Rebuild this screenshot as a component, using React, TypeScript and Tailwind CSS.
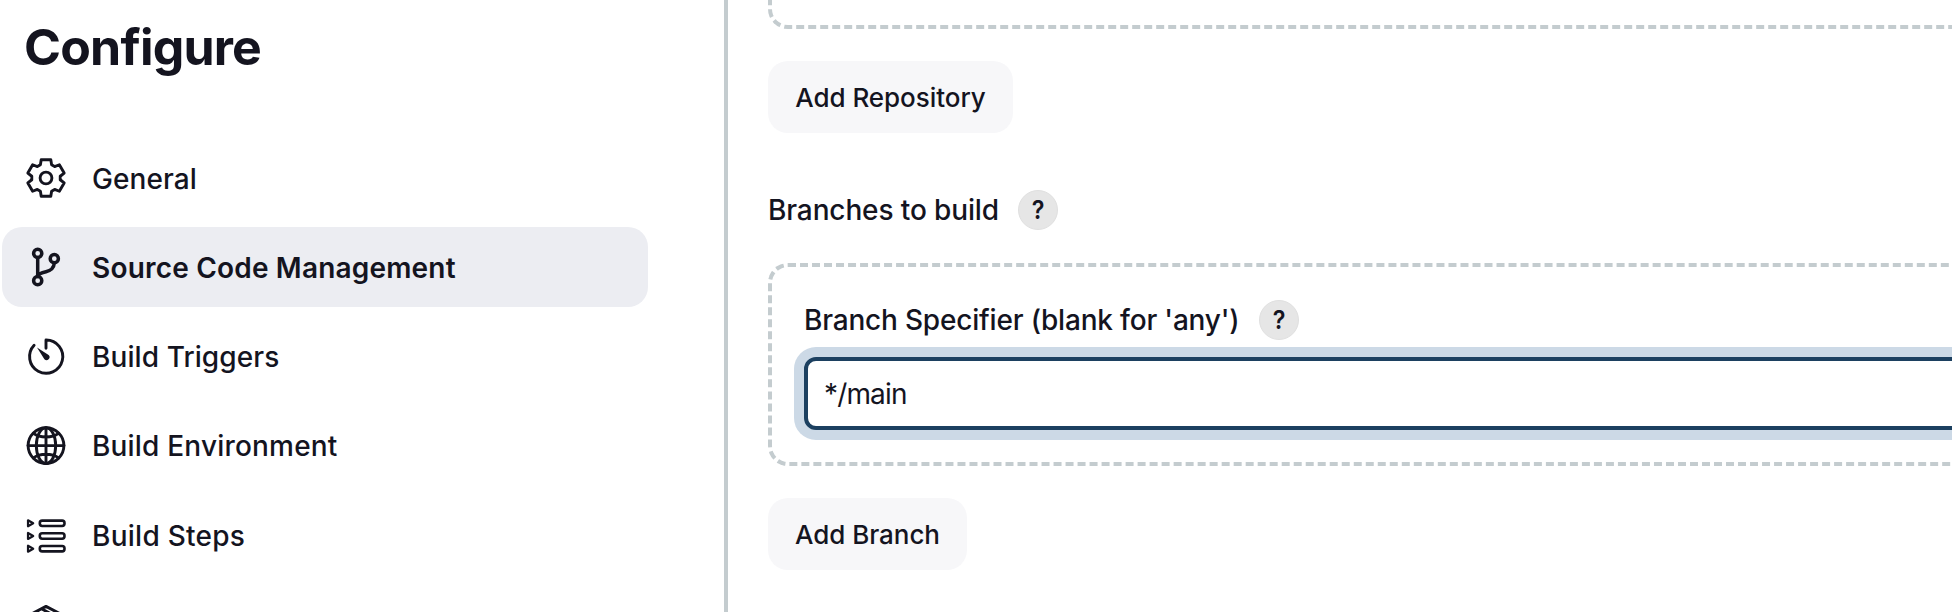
import type { ReactNode } from "react";

function gearPath(): string {
  const tooth: [number, number][] = [
    [-5.6, -13.2],
    [-4.8, -18.2],
    [4.8, -18.2],
    [5.6, -13.2],
  ];
  const points: string[] = [];
  for (let i = 0; i < 6; i++) {
    const a = (i * Math.PI) / 3;
    for (const [x, y] of tooth) {
      const px = 22 + x * Math.cos(a) - y * Math.sin(a);
      const py = 22 + x * Math.sin(a) + y * Math.cos(a);
      points.push(`${px.toFixed(2)} ${py.toFixed(2)}`);
    }
  }
  return `M${points.join("L")}Z`;
}

function Icon({ children, width = 2.9 }: { children: ReactNode; width?: number }) {
  return (
    <svg
      viewBox="0 0 44 44"
      className="size-11 shrink-0"
      fill="none"
      stroke="currentColor"
      strokeWidth={width}
      strokeLinecap="round"
      strokeLinejoin="round"
    >
      {children}
    </svg>
  );
}

const gear = (
  <Icon>
    <path d={gearPath()} />
    <circle cx="22" cy="22" r="5.9" />
  </Icon>
);

const branch = (
  <Icon width={3.5}>
    <circle cx="13.7" cy="8.3" r="4.1" />
    <circle cx="30.3" cy="13.7" r="4.1" />
    <circle cx="13.7" cy="35.7" r="4.1" />
    <path d="M13.7 12.5V31.5M30.3 18C30 23 26.5 25.6 22 26.7S14.6 28.6 13.7 31" />
  </Icon>
);

const timer = (
  <Icon>
    <path d="M22 13.3V5.0A16.6 16.6 0 1 1 10.1 10.2" />
    <path d="M13 12.6L24.6 20A2.9 2.9 0 0 1 20.4 24.2Z" fill="currentColor" stroke="none" />
  </Icon>
);

const globe = (
  <Icon>
    <circle cx="22" cy="21.6" r="17.9" />
    <ellipse cx="22" cy="21.6" rx="9.7" ry="17.9" />
    <path d="M22 3.6V39.6M4 21.6H40M9.5 9.4C16 14.2 28 14.2 34.5 9.4M9.5 33.8C16 29 28 29 34.5 33.8" />
  </Icon>
);

const steps = (
  <Icon width={2.6}>
    {[9.3, 22, 34.7].map((y) => (
      <g key={y}>
        <rect x="15.8" y={y - 2.7} width="24.7" height="5.4" rx="2.4" />
        <path d={`M4 ${y - 3}V${y + 3}L9.2 ${y}Z`} strokeWidth="2.2" />
      </g>
    ))}
  </Icon>
);

const cube = (
  <Icon>
    <path d="M22 3.4L38.5 12V32L22 40.6L5.5 32V12ZM5.5 12L22 20.6L38.5 12M22 20.6V40.6M17.5 5.8L34 14.6M12 8.7L28.5 17.5" />
  </Icon>
);

const items = [
  { icon: gear, label: "General", text: "pt-0.5 tracking-[0.08px]" },
  { icon: branch, label: "Source Code Management", text: "pt-0.5 font-semibold tracking-[0.19px]", selected: true },
  { icon: timer, label: "Build Triggers", text: "tracking-[0.09px]" },
  { icon: globe, label: "Build Environment", text: "tracking-[0.19px]" },
  { icon: steps, label: "Build Steps", text: "tracking-[0.26px]" },
  { icon: cube, label: "", text: "" },
];

function Help() {
  return (
    <button className="flex size-10 items-center justify-center rounded-full border border-[#e0e0e0] bg-[#e6e6e6] text-[26px] leading-none font-semibold">
      <span className="scale-x-90">?</span>
    </button>
  );
}

function AddButton({ label, className }: { label: string; className: string }) {
  return (
    <button className={`flex h-[72px] shrink-0 items-center justify-center rounded-[20px] bg-[#f7f7f9] pt-px text-[26px] font-medium tracking-[-0.05px] ${className}`}>
      {label}
    </button>
  );
}

export default function App() {
  return (
    <div className="flex h-[612px] w-[1952px] overflow-hidden bg-white font-['Inter',sans-serif] text-[#14141f]">
      <aside className="flex w-[728px] shrink-0 flex-col border-r-4 border-[#c4cccf] pl-0.5">
        <h1 className="mt-[17px] pl-[22px] text-[50px] leading-[60px] font-bold tracking-[-0.8px]">Configure</h1>
        <nav className="mt-[61px] flex w-[646px] flex-col gap-[9.4px]">
          {items.map((item, index) => (
            <a
              key={index}
              className={`flex h-20 shrink-0 items-center gap-6 rounded-[20px] pl-[22px] text-[28px] ${item.selected ? "bg-[#ecedf2]" : "font-medium"}`}
            >
              {item.icon}
              {item.label && <span className={item.text}>{item.label}</span>}
            </a>
          ))}
        </nav>
      </aside>
      <main className="flex min-w-0 grow flex-col items-start pl-10">
        <div className="-mt-[71px] h-[100px] w-[1220px] shrink-0 rounded-[20px] border-4 border-dashed border-[#c4cccf]" />
        <AddButton label="Add Repository" className="mt-8 w-[245px]" />
        <div className="mt-[57px] flex h-10 shrink-0 items-center gap-5 text-[28px] font-medium">
          <span className="w-[230px] tracking-[-0.12px] whitespace-nowrap">Branches to build</span>
          <Help />
        </div>
        <section className="mt-[33px] h-[203px] w-[1220px] shrink-0 rounded-[20px] border-4 border-dashed border-[#c4cccf] pt-[33px] pl-8">
          <div className="flex h-10 items-center gap-5 text-[28px] font-medium">
            <span className="w-[435px] tracking-[-0.19px] whitespace-nowrap">Branch Specifier (blank for 'any')</span>
            <Help />
          </div>
          <input
            className="mt-[17px] block h-[73px] w-[1200px] rounded-xl border-4 border-[#1c4060] bg-white px-4 pt-px text-[28px] tracking-[-0.85px] shadow-[0_0_0_10px_#ccd9e6] outline-none"
            defaultValue="*/main"
          />
        </section>
        <AddButton label="Add Branch" className="mt-8 w-[199px]" />
      </main>
    </div>
  );
}
